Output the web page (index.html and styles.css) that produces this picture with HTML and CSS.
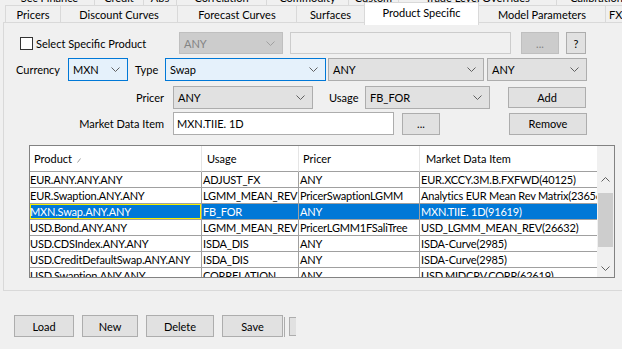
FILE: index.html
```html
<!DOCTYPE html>
<html lang="en">
<head>
    <meta charset="UTF-8">
    <title>Product Specific</title>
    <link rel="stylesheet" href="styles.css">
</head>
<body>
    <div class="tabs-back">
        <div class="tab0" style="width: 90px">Sec Finance</div>
        <div class="tab0" style="width: 49px">Credit</div>
        <div class="tab0" style="width: 33px">Abs</div>
        <div class="tab0" style="width: 90px">Correlation</div>
        <div class="tab0" style="width: 82px">Commodity</div>
        <div class="tab0" style="width: 50px">Custom</div>
        <div class="tab0" style="width: 158px">Trade Level Overrides</div>
        <div class="tab0" style="width: 80px">Calibration</div>
    </div>
    <div class="tabs">
        <div class="tab" style="width: 55px">Pricers</div>
        <div class="tab" style="width: 117px">Discount Curves</div>
        <div class="tab" style="width: 119px">Forecast Curves</div>
        <div class="tab" style="width: 68px">Surfaces</div>
        <div class="tab active" style="width: 115px">Product Specific</div>
        <div class="tab" style="width: 126px">Model Parameters</div>
        <div class="tab tab-cut" style="width: 40px">FX Options</div>
    </div>

    <div class="panel">
        <div class="row row-select">
            <label class="check-label">
                <span class="checkbox"></span>
                Select Specific Product
            </label>
            <div class="combo disabled w-104"><span>ANY</span><svg class="chev" width="9" height="5"><path d="M0.5 0.5 L4.5 4.5 L8.5 0.5" /></svg></div>
            <div class="textbox disabled w-221 ml-7"></div>
            <button class="btn disabled w-38 ml-10">...</button>
            <button class="btn w-20 ml-7">?</button>
        </div>

        <div class="row row-currency">
            <span class="lbl w-52">Currency</span>
            <div class="combo blue w-60"><span>MXN</span><svg class="chev" width="9" height="5"><path d="M0.5 0.5 L4.5 4.5 L8.5 0.5" /></svg></div>
            <span class="lbl lbl-type">Type</span>
            <div class="combo blue w-161"><span>Swap</span><svg class="chev" width="9" height="5"><path d="M0.5 0.5 L4.5 4.5 L8.5 0.5" /></svg></div>
            <div class="combo w-156 ml-2"><span>ANY</span><svg class="chev" width="9" height="5"><path d="M0.5 0.5 L4.5 4.5 L8.5 0.5" /></svg></div>
            <div class="combo w-100 ml-3"><span>ANY</span><svg class="chev" width="9" height="5"><path d="M0.5 0.5 L4.5 4.5 L8.5 0.5" /></svg></div>
        </div>

        <div class="row row-pricer">
            <span class="lbl lbl-right">Pricer</span>
            <div class="combo w-140"><span>ANY</span><svg class="chev" width="9" height="5"><path d="M0.5 0.5 L4.5 4.5 L8.5 0.5" /></svg></div>
            <span class="lbl lbl-usage">Usage</span>
            <div class="combo w-125"><span>FB_FOR</span><svg class="chev" width="9" height="5"><path d="M0.5 0.5 L4.5 4.5 L8.5 0.5" /></svg></div>
            <button class="btn btn-small w-78 ml-18">Add</button>
        </div>

        <div class="row row-mdi">
            <span class="lbl lbl-right">Market Data Item</span>
            <div class="textbox w-221">MXN.TIIE. 1D</div>
            <button class="btn w-38 ml-8">...</button>
            <button class="btn w-78 ml-69">Remove</button>
        </div>

        <div class="grid">
            <div class="grid-body">
                <div class="grid-head">
                    <div class="hcell">Product <svg class="sort" width="4" height="5"><path d="M0.5 4.5 L3.5 0.5" /></svg></div>
                    <div class="hcell">Usage</div>
                    <div class="hcell">Pricer</div>
                    <div class="hcell">Market Data Item</div>
                </div>
                <div class="grid-row">
                    <div class="cell">EUR.ANY.ANY.ANY</div>
                    <div class="cell">ADJUST_FX</div>
                    <div class="cell">ANY</div>
                    <div class="cell">EUR.XCCY.3M.B.FXFWD(40125)</div>
                </div>
                <div class="grid-row">
                    <div class="cell">EUR.Swaption.ANY.ANY</div>
                    <div class="cell">LGMM_MEAN_REV</div>
                    <div class="cell">PricerSwaptionLGMM</div>
                    <div class="cell">Analytics EUR Mean Rev Matrix(23656)</div>
                </div>
                <div class="grid-row selected">
                    <div class="cell focus">MXN.Swap.ANY.ANY</div>
                    <div class="cell">FB_FOR</div>
                    <div class="cell">ANY</div>
                    <div class="cell">MXN.TIIE. 1D(91619)</div>
                </div>
                <div class="grid-row">
                    <div class="cell">USD.Bond.ANY.ANY</div>
                    <div class="cell">LGMM_MEAN_REV</div>
                    <div class="cell">PricerLGMM1FSaliTree</div>
                    <div class="cell">USD_LGMM_MEAN_REV(26632)</div>
                </div>
                <div class="grid-row">
                    <div class="cell">USD.CDSIndex.ANY.ANY</div>
                    <div class="cell">ISDA_DIS</div>
                    <div class="cell">ANY</div>
                    <div class="cell">ISDA-Curve(2985)</div>
                </div>
                <div class="grid-row">
                    <div class="cell">USD.CreditDefaultSwap.ANY.ANY</div>
                    <div class="cell">ISDA_DIS</div>
                    <div class="cell">ANY</div>
                    <div class="cell">ISDA-Curve(2985)</div>
                </div>
                <div class="grid-row">
                    <div class="cell">USD.Swaption.ANY.ANY</div>
                    <div class="cell">CORRELATION</div>
                    <div class="cell">ANY</div>
                    <div class="cell">USD.MIDCRV.CORR(62619)</div>
                </div>
            </div>
            <div class="scrollbar">
                <div class="scroll-corner"></div>
                <div class="scroll-arrow"><svg width="9" height="5"><path d="M0.5 4.5 L4.5 0.5 L8.5 4.5" /></svg></div>
                <div class="scroll-track">
                    <div class="scroll-thumb"></div>
                </div>
                <div class="scroll-arrow"><svg width="9" height="5"><path d="M0.5 0.5 L4.5 4.5 L8.5 0.5" /></svg></div>
            </div>
        </div>
    </div>

    <div class="actions">
        <button class="btn w-60">Load</button>
        <button class="btn w-56 ml-8">New</button>
        <button class="btn w-68 ml-8">Delete</button>
        <button class="btn btn-save w-61 ml-8">Save</button>
        <div class="btn-hidden"></div>
    </div>
</body>
</html>
```

FILE: styles.css
```css
body {
    margin: 0;
    background-color: #f0f0f0;
    font-family: Lato, "Liberation Sans", sans-serif;
    font-size: 11px;
    color: #000;
    overflow: hidden;
}

/* tab strip, back row is cut off by the window */
.tabs-back {
    display: flex;
    height: 5px;
    overflow: hidden;
    padding-left: 5px;
}

.tab0 {
    flex: none;
    box-sizing: border-box;
    height: 14px;
    margin-top: -9px;
    line-height: 14px;
    text-align: center;
    border-right: 1px solid #d9d9d9;
    white-space: nowrap;
    overflow: hidden;
}

.tabs {
    display: flex;
    height: 17px;
    padding-left: 5px;
}

.tab {
    flex: none;
    box-sizing: border-box;
    height: 17px;
    line-height: 17px;
    text-align: center;
    border-left: 1px solid #d9d9d9;
    border-top: 1px solid #d9d9d9;
    white-space: nowrap;
    overflow: hidden;
}

.tab-cut {
    text-align: left;
    padding-left: 3px;
}

.tab.active {
    position: relative;
    z-index: 1;
    height: 23px;
    margin-top: -3px;
    line-height: 19px;
    background-color: #fff;
    border: 1px solid #d9d9d9;
    border-bottom: none;
}

.tab.active + .tab {
    border-left: none;
}

.panel {
    box-sizing: border-box;
    width: 640px;
    height: 269px;
    margin-left: 3px;
    padding: 9px 0 0 12px;
    border: 1px solid #d9d9d9;
}

.row {
    display: flex;
    align-items: center;
    height: 23px;
}

.row-select {
    height: 22px;
}

.row-currency {
    margin-top: 4px;
}

.row-pricer {
    margin-top: 5px;
}

.row-mdi {
    margin-top: 3px;
}

.lbl {
    flex: none;
    white-space: nowrap;
}

.lbl-type {
    width: 30px;
    padding-left: 7px;
}

.lbl-right {
    box-sizing: border-box;
    width: 157px;
    padding-right: 9px;
    text-align: right;
}

.lbl-usage {
    box-sizing: border-box;
    width: 52px;
    padding-left: 16px;
}

.check-label {
    display: flex;
    align-items: center;
    width: 159px;
    margin-left: 4px;
}

.checkbox {
    box-sizing: border-box;
    width: 13px;
    height: 13px;
    margin-right: 3px;
    border: 1px solid #333;
    background-color: #fff;
}

.combo {
    flex: none;
    box-sizing: border-box;
    display: flex;
    align-items: center;
    justify-content: space-between;
    height: 23px;
    padding: 0 7px 0 4px;
    background-color: #e1e1e1;
    border: 1px solid #adadad;
}

.combo.blue {
    background-color: #e5f1fb;
    border-color: #0078d7;
}

.combo.disabled {
    height: 22px;
    background-color: #cccccc;
    border-color: #bfbfbf;
    color: #838383;
}

.chev {
    fill: none;
    stroke: #606060;
}

.combo.disabled .chev {
    stroke: #a0a0a0;
}

.textbox {
    flex: none;
    box-sizing: border-box;
    height: 23px;
    line-height: 21px;
    padding-left: 3px;
    background-color: #fff;
    border: 1px solid #adadad;
}

.textbox.disabled {
    height: 22px;
    background-color: #f0f0f0;
    border-color: #cccccc;
}

.btn {
    flex: none;
    box-sizing: border-box;
    height: 22px;
    padding: 0;
    font-family: inherit;
    font-size: 11px;
    color: #000;
    background-color: #e1e1e1;
    border: 1px solid #adadad;
}

.btn.disabled {
    background-color: #cccccc;
    border-color: #bfbfbf;
    color: #838383;
}

.btn-small {
    height: 21px;
}

/* widths and gaps */
.w-20 { width: 20px; }
.w-38 { width: 38px; }
.w-52 { width: 52px; }
.w-56 { width: 56px; }
.w-60 { width: 60px; }
.w-61 { width: 61px; }
.w-68 { width: 68px; }
.w-78 { width: 78px; }
.w-100 { width: 100px; }
.w-104 { width: 104px; }
.w-125 { width: 125px; }
.w-140 { width: 140px; }
.w-156 { width: 156px; }
.w-161 { width: 161px; }
.w-221 { width: 221px; }
.ml-2 { margin-left: 2px; }
.ml-3 { margin-left: 3px; }
.ml-7 { margin-left: 7px; }
.ml-8 { margin-left: 8px; }
.ml-10 { margin-left: 10px; }
.ml-18 { margin-left: 18px; }
.ml-69 { margin-left: 69px; }

/* data grid */
.grid {
    display: flex;
    box-sizing: border-box;
    width: 586px;
    height: 133px;
    margin: 10px 0 0 13px;
    border: 1px solid #828282;
    overflow: hidden;
}

.grid-body {
    width: 567px;
    background-color: #fff;
}

.grid-head,
.grid-row {
    display: grid;
    grid-template-columns: 172px 97px 121px 177px;
}

.hcell {
    box-sizing: border-box;
    height: 26px;
    line-height: 25px;
    padding-left: 4px;
    border-right: 1px solid #e5e5e5;
    border-bottom: 1px solid #a0a0a0;
    white-space: nowrap;
}

.hcell:nth-child(2) { padding-left: 5px; }
.hcell:nth-child(4) { padding-left: 6px; border-right: none; }

.sort {
    margin-left: 2px;
    fill: none;
    stroke: #a0a0a0;
}

.cell {
    box-sizing: border-box;
    height: 16px;
    line-height: 15px;
    padding-left: 1px;
    letter-spacing: -0.2px;
    border-right: 1px solid #a0a0a0;
    border-bottom: 1px solid #a0a0a0;
    white-space: nowrap;
    overflow: hidden;
}

.cell:first-child {
    padding-left: 0;
}

.cell:last-child {
    border-right: none;
}

.grid-row.selected {
    background-color: #0078d7;
    color: #fff;
}

.cell.focus {
    box-shadow: inset 0 0 0 1px #f5ef00;
}

.scrollbar {
    display: flex;
    flex-direction: column;
    width: 17px;
    background-color: #f0f0f0;
}

.scroll-corner {
    height: 25px;
}

.scroll-arrow {
    display: flex;
    align-items: center;
    justify-content: center;
    height: 17px;
}

.scroll-arrow svg {
    fill: none;
    stroke: #606060;
}

.scroll-track {
    flex: 1;
    padding: 5px 1px 0 1px;
}

.scroll-thumb {
    height: 54px;
    background-color: #cdcdcd;
}

/* bottom buttons */
.actions {
    display: flex;
    margin: 24px 0 0 14px;
}

.btn-save {
    box-shadow: 1px 1px 0 0 #f0f0f0, 2px 2px 0 0 #adadad;
}

.btn-hidden {
    box-sizing: border-box;
    width: 7px;
    height: 19px;
    margin: 2px 0 0 6px;
    background-color: #e1e1e1;
    border: 1px solid #adadad;
    border-right: none;
}
```
